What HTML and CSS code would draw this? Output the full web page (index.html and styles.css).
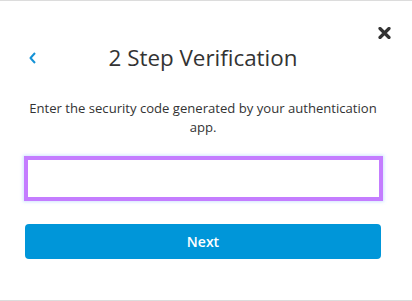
FILE: index.html
```html
<!DOCTYPE html>
<html lang="en">
<head>
<meta charset="utf-8">
<title>2 Step Verification</title>
<link rel="stylesheet" href="styles.css">
</head>
<body>
<div class="modal">
  <div class="topbar">
    <button class="close" aria-label="Close">
      <svg width="13" height="12" viewBox="0 0 13 12"><path d="M2 1.5 L11 10.5 M11 1.5 L2 10.5" stroke="#333" stroke-width="3.2" stroke-linecap="round" fill="none"/></svg>
    </button>
  </div>
  <div class="title-row">
    <button class="back" aria-label="Back">
      <svg width="9" height="12" viewBox="0 0 9 12"><path d="M7 1 L2.5 6 L7 11" stroke="#1592d6" stroke-width="2" fill="none" stroke-linejoin="round"/></svg>
    </button>
    <h1 class="title">2 Step Verification</h1>
    <span></span>
  </div>
  <p class="desc">Enter the security code generated by your authentication app.</p>
  <input class="code" type="text" aria-label="Security code">
  <button class="next">Next</button>
</div>
</body>
</html>
```
FILE: styles.css
```css
* { box-sizing: border-box; }
html, body { margin: 0; padding: 0; background: #fff; }
body { font-family: "Open Sans", "Noto Sans", sans-serif; color: #333; }
.modal {
  width: 412px;
  height: 301px;
  border-top: 1px solid #dcdcdc;
  border-bottom: 1px solid #dcdcdc;
  padding: 0 31px 0 25px;
  display: flex;
  flex-direction: column;
}
.topbar {
  display: flex;
  justify-content: flex-end;
  margin-right: -10px;
  padding-top: 26px;
  height: 38px;
}
.close, .back {
  border: 0;
  background: none;
  padding: 0;
  display: flex;
  cursor: pointer;
}
.title-row {
  display: grid;
  grid-template-columns: 1fr auto 1fr;
  align-items: center;
  margin-top: 6px;
  height: 26px;
}
.back { padding-left: 3px; }
.title {
  margin: 0;
  font-size: 22.4px;
  font-weight: 400;
  line-height: 26px;
  color: #333;
}
.desc {
  margin: 28px 0 0;
  font-size: 13.1px;
  line-height: 19px;
  text-align: center;
  color: #333;
}
.code {
  margin: 19px -2px 0 -1px;
  height: 45px;
  border: 4px solid #c47dff;
  box-shadow: 0 0 3px 1px rgba(120, 180, 255, 0.35);
  outline: none;
  background: #fff;
}
.next {
  margin-top: 23px;
  height: 35px;
  border: 0;
  border-radius: 4px;
  background: #0096d9;
  color: #fff;
  font-family: "Open Sans", "Noto Sans", sans-serif;
  font-size: 14px;
  font-weight: 600;
  cursor: pointer;
}
```
